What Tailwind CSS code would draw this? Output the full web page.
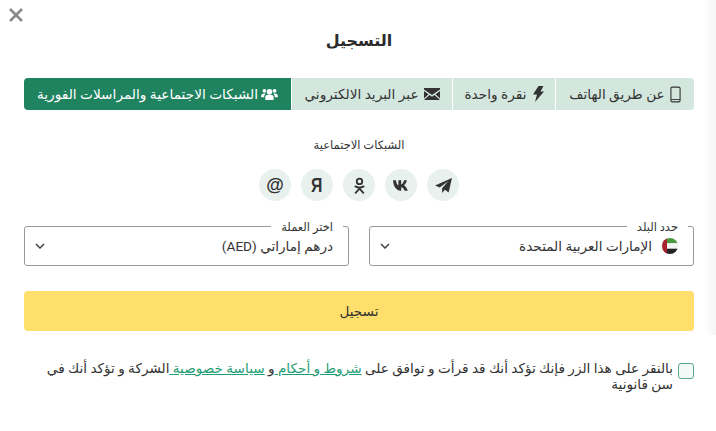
<!DOCTYPE html>
<html lang="ar" dir="rtl">
<head>
    <meta charset="UTF-8">
    <meta name="viewport" content="width=device-width, initial-scale=1.0">
    <title>التسجيل</title>
    <script src="https://cdn.jsdelivr.net/npm/@tailwindcss/browser@4"></script>
</head>
<body class="bg-white">
    <div class="relative w-[716px] h-[431px] overflow-hidden bg-white font-['Roboto','DejaVu_Sans',sans-serif] text-[#333]">
        <!-- soft edge on the right -->
        <div class="absolute right-0 top-0 w-[12px] h-[335px] bg-gradient-to-l from-[#f5f5f5] to-white"></div>

        <!-- close -->
        <button class="absolute left-[9px] top-[8px] w-[14px] h-[14px] text-[#888]" aria-label="close">
            <svg viewBox="0 0 14 14" class="w-[14px] h-[14px]" fill="none" stroke="currentColor" stroke-width="2.6"><path d="M1 1l12 12M13 1L1 13"/></svg>
        </button>

        <div class="relative pr-[22px] pl-[24px]">
            <h1 class="h-[78px] pt-[27px] text-center text-[16px] leading-[27px] font-bold text-[#2b2b2b]">التسجيل</h1>

            <!-- tabs -->
            <div class="flex h-[32px] gap-px text-[13.7px] rounded overflow-hidden">
                <div class="w-[138px] flex items-center justify-center gap-[5px] bg-[#d3e7df]">
                    <svg viewBox="0 0 12 18" class="w-[11px] h-[17px]" fill="none" stroke="#333" stroke-width="1.2"><rect x="1" y="1" width="10" height="16" rx="1.5"/><path d="M1 14.500h10" stroke-width="1"/></svg>
                    <span>عن طريق الهاتف</span>
                </div>
                <div class="w-[102px] flex items-center justify-center gap-[5px] bg-[#d3e7df]">
                    <svg viewBox="0 0 12 16" class="w-[12px] h-[16px]" fill="#333"><path d="M6.500 0h5L8.500 5.500H12L3 16l2-7.500H1z"/></svg>
                    <span>نقرة واحدة</span>
                </div>
                <div class="w-[160px] flex items-center justify-center gap-[5px] bg-[#d3e7df]">
                    <svg viewBox="0 0 16 12" class="w-[16px] h-[12px]" fill="#333"><path d="M0 1.500V0h16v1.500L8 7zM0 3l4.500 3.200L0 10.500zM16 3v7.500l-4.500-4.300zM5.500 7L8 8.800 10.500 7 16 12H0z"/></svg>
                    <span>عبر البريد الالكتروني</span>
                </div>
                <div class="flex-1 flex items-center justify-center gap-[3px] bg-[#20835f] text-white">
                    <svg viewBox="0 0 18 14" class="w-[17px] h-[13px]" fill="#fff"><circle cx="9" cy="4" r="3"/><circle cx="3.500" cy="3" r="2"/><circle cx="14.500" cy="3" r="2"/><path d="M4.500 13V10c0-2 1.500-3 4.500-3s4.500 1 4.500 3v3zM0 9c0-2 1-3 3.500-3 .5 0 1 .1 1.300.3C3.700 7.200 3.300 8.300 3.300 10H0zM18 9c0-2-1-3-3.500-3-.5 0-1 .1-1.300.3 1.100.9 1.500 2 1.500 3.700H18z"/></svg>
                    <span>الشبكات الاجتماعية والمراسلات الفورية</span>
                </div>
            </div>

            <p class="mt-[26px] text-center text-[11.5px] leading-[18px]">الشبكات الاجتماعية</p>

            <!-- social -->
            <div dir="ltr" class="mt-[15px] flex justify-center gap-[10px] text-[#333]">
                <span class="w-[32px] h-[32px] rounded-full bg-[#e9f1ee] flex items-center justify-center font-['Liberation_Sans',sans-serif] font-bold text-[18px]">@</span>
                <span class="w-[32px] h-[32px] rounded-full bg-[#e9f1ee] flex items-center justify-center font-['Liberation_Sans',sans-serif] font-bold text-[21px]"><span class="inline-block scale-x-[.75]">Я</span></span>
                <span class="w-[32px] h-[32px] rounded-full bg-[#e9f1ee] flex items-center justify-center">
                    <svg viewBox="0 0 12 18" class="w-[11px] h-[17px]" fill="none" stroke="#333" stroke-width="2"><circle cx="6" cy="4.500" r="3"/><path d="M1.500 10c3 1.700 6 1.700 9 0M6 11v1.500M1.800 17L6 12.500 10.200 17" stroke-linecap="round"/></svg>
                </span>
                <span class="w-[32px] h-[32px] rounded-full bg-[#e9f1ee] flex items-center justify-center">
                    <svg viewBox="0 0 18 11" class="w-[17px] h-[11px]" fill="#333"><path d="M0 0h3.200c.2 3 1.300 5 2.500 5.400V0h3v4.500C9.900 4.300 11 2.500 11.700 0h3c-.5 2.700-2 4.500-3.200 5.300 1.200.6 3.100 2.200 4.100 5.700h-3.300c-.7-2.100-2.200-3.500-3.600-3.700V11h-.8C4 11 .4 7 0 0z"/></svg>
                </span>
                <span class="w-[32px] h-[32px] rounded-full bg-[#e9f1ee] flex items-center justify-center">
                    <svg viewBox="0 0 18 16" class="w-[17px] h-[15px]" fill="#333"><path d="M18 0L0 8l5 2 9-6.500-6.500 7.500V16l3-3.500 4 3z"/></svg>
                </span>
            </div>

            <!-- selects -->
            <div class="mt-[25px] grid grid-cols-2 gap-[20px]">
                <div class="relative h-[40px] border border-[#999] rounded-[3px] flex items-center justify-between pr-[15px] pl-[10px] text-[13.6px]">
                    <span class="absolute -top-[7px] right-[5px] bg-white px-[10px] text-[11.5px] leading-[14px]">حدد البلد</span>
                    <span class="flex items-center gap-[10px]">
                        <svg viewBox="0 0 16 16" class="w-[16px] h-[16px]"><defs><clipPath id="flag"><circle cx="8" cy="8" r="8"/></clipPath></defs><g clip-path="url(#flag)"><rect width="16" height="5.300" fill="#4c9a3f"/><rect y="5.300" width="16" height="5.400" fill="#f3f3f3"/><rect y="10.700" width="16" height="5.300" fill="#222"/><rect width="5" height="16" fill="#a8232e"/></g></svg>
                        <span>الإمارات العربية المتحدة</span>
                    </span>
                    <svg viewBox="0 0 10 6" class="w-[10px] h-[6px]" fill="none" stroke="#444" stroke-width="1.500"><path d="M1 1l4 4 4-4"/></svg>
                </div>
                <div class="relative h-[40px] border border-[#999] rounded-[3px] flex items-center justify-between pr-[15px] pl-[10px] text-[13.6px]">
                    <span class="absolute -top-[7px] right-[5px] bg-white px-[10px] text-[11.5px] leading-[14px]">اختر العملة</span>
                    <span>درهم إماراتي (AED)</span>
                    <svg viewBox="0 0 10 6" class="w-[10px] h-[6px]" fill="none" stroke="#444" stroke-width="1.500"><path d="M1 1l4 4 4-4"/></svg>
                </div>
            </div>

            <button class="mt-[25px] w-full h-[40px] rounded bg-[#ffdf6b] text-[13.6px] text-[#333]">تسجيل</button>

            <!-- terms -->
            <div class="mt-[29px] flex items-start gap-[5px] text-[13.6px] leading-[16px]">
                <span class="mt-[3px] shrink-0 w-[16px] h-[16px] rounded-[3px] border border-[#5aa88a] bg-[#f1faf6]"></span>
                <p>بالنقر على هذا الزر فإنك تؤكد أنك قد قرأت و توافق على <a class="text-[#1f9d74] underline">شروط و أحكام </a>و <a class="text-[#1f9d74] underline">سياسة خصوصية </a>الشركة و تؤكد أنك في سن قانونية</p>
            </div>
        </div>
    </div>
</body>
</html>
